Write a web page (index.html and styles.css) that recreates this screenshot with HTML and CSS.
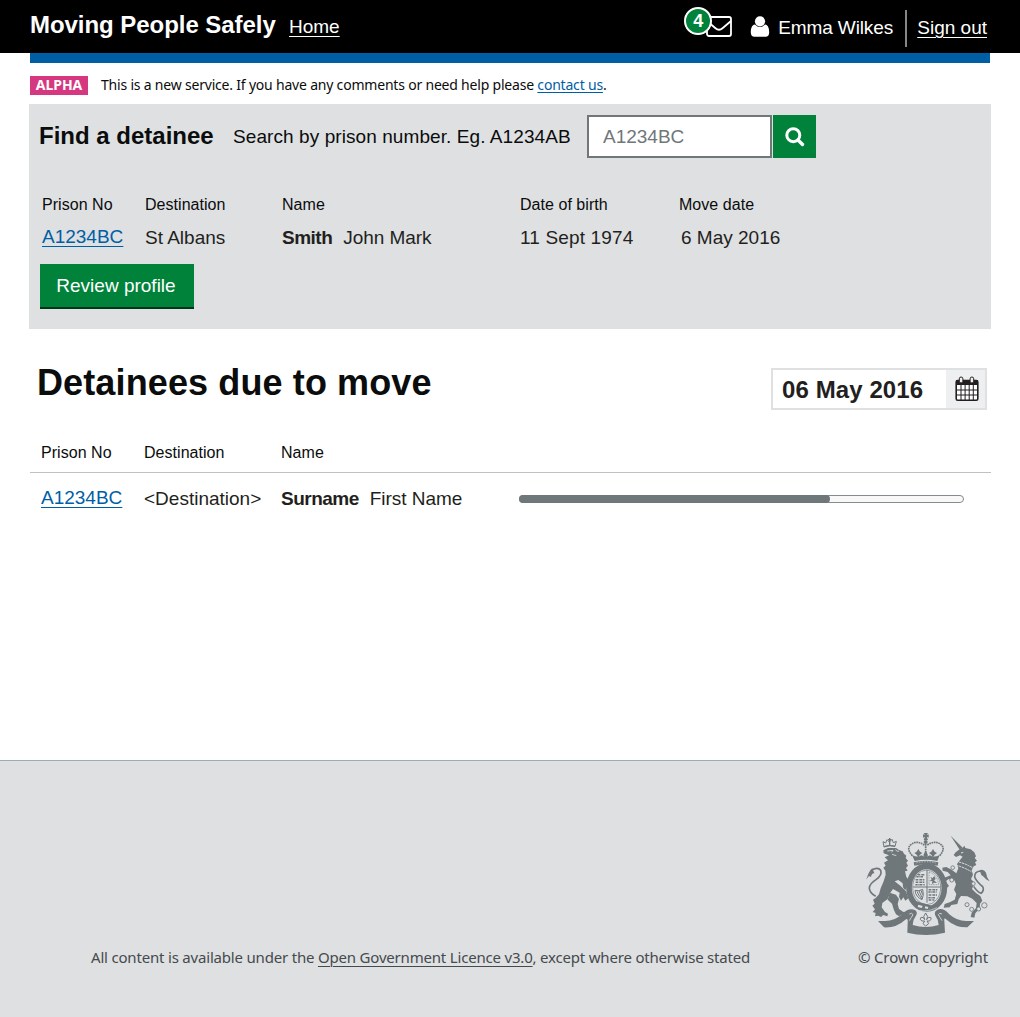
FILE: index.html
```html
<!DOCTYPE html>
<html lang="en">
<head>
<meta charset="utf-8">
<title>Moving People Safely</title>
<link rel="stylesheet" href="styles.css">
</head>
<body>
<header class="topbar">
  <span class="brand">Moving People Safely</span>
  <a class="home" href="#">Home</a>
  <div class="account">
    <a class="mail" href="#" aria-label="Messages">
      <svg width="26" height="21" viewBox="0 0 26 21" fill="none" stroke="#fff" stroke-width="1.8"><rect x="1" y="1" width="24" height="19" rx="2"/><path d="M1 5 L9.500 12.300 Q13 15.300 16.500 12.300 L25 5"/></svg>
      <span class="badge">4</span>
    </a>
    <svg class="user" width="20" height="22" viewBox="0 0 20 22" fill="#fff"><circle cx="10" cy="5.300" r="5.100"/><path d="M5 8.500 C1.500 9 .8 13 .8 16.500 C.8 19.200 2.200 20.800 4.500 20.800 H15.500 C17.800 20.800 19.200 19.200 19.200 16.500 C19.200 13 18.500 9 15 8.500 Q12.800 11 10 11 Q7.200 11 5 8.500Z"/></svg>
    <span class="user-name">Emma Wilkes</span>
    <a class="signout" href="#">Sign out</a>
  </div>
</header>
<div class="blue-bar"></div>
<div class="phase">
  <strong class="phase-tag">ALPHA</strong>
  <span class="phase-text">This is a new service. If you have any comments or need help please <a href="#">contact us</a>.</span>
</div>

<main>
  <section class="finder">
    <form class="search">
      <h2>Find a detainee</h2>
      <label for="prison-no">Search by prison number. Eg. A1234AB</label>
      <input id="prison-no" type="text" placeholder="A1234BC">
      <button class="search-button" type="button" aria-label="Search">
        <svg width="20" height="20" viewBox="0 0 20 20" fill="none" stroke="#fff"><circle cx="8.300" cy="8.200" r="6.500" stroke-width="3"/><path d="M13 13 L17.500 17.500" stroke-width="3.400" stroke-linecap="round"/></svg>
      </button>
    </form>
    <div class="grid heads">
      <span>Prison No</span><span>Destination</span><span>Name</span><span>Date of birth</span><span>Move date</span>
    </div>
    <div class="grid values">
      <a href="#">A1234BC</a><span>St Albans</span><span class="name"><b>Smith</b>John Mark</span><span class="dob">11 Sept 1974</span><span class="moved">6 May 2016</span>
    </div>
    <button class="review" type="button">Review profile</button>
  </section>

  <section class="due">
    <div class="due-top">
      <h1>Detainees due to move</h1>
      <div class="date">
        <span class="date-value">06 May 2016</span>
        <span class="date-icon">
          <svg width="24" height="26" viewBox="0 0 24 26"><rect x="1.200" y="4.500" width="21.600" height="19.800" rx="1.500" fill="#fff" stroke="#231f20" stroke-width="1.600"/><path d="M1 4 H23 V9 H1Z" fill="#231f20"/><path d="M6 9 V24 M10.100 9 V24 M14.200 9 V24 M18.300 9 V24 M1 14 H23 M1 19 H23" stroke="#231f20" stroke-width="1"/><rect x="4.300" y="1" width="3.600" height="6" rx="1.800" fill="#eeeff0" stroke="#231f20" stroke-width="1"/><rect x="15.100" y="1" width="3.600" height="6" rx="1.800" fill="#eeeff0" stroke="#231f20" stroke-width="1"/></svg>
        </span>
      </div>
    </div>
    <div class="grid heads">
      <span>Prison No</span><span>Destination</span><span>Name</span>
    </div>
    <div class="grid values row">
      <a href="#">A1234BC</a><span>&lt;Destination&gt;</span><span class="name"><b>Surname</b>First Name</span>
      <div class="progress"><div class="progress-fill" style="width:70.100%"></div></div>
    </div>
  </section>
</main>

<footer>
  <p class="licence">All content is available under the <a href="#">Open Government Licence v3.0</a>, except where otherwise stated</p>
  <div class="crown">
    <svg class="crest" width="125" height="104" viewBox="30 36 375 312" fill="#6f777b" stroke="none">
      <!-- scroll ribbon -->
      <path d="M69 303 L91 303 Q119 303 141 283 Q160 262 180 270 Q190 277 182 289 Q173 300 173 315 Q212 327 251 315 Q251 300 242 289 Q235 275 247 269 Q265 262 283 283 Q305 303 333 303 L357 303 L337 322 Q302 323 275 299 Q266 290 268 303 L270 338 Q212 352 157 338 L158 309 Q160 292 151 299 Q124 324 87 322Z"/>
      <path d="M163 282 Q171 277 174 284 Q169 292 163 302 M261 282 Q253 277 250 284 Q255 292 261 302" fill="none" stroke="#dee0e2" stroke-width="2.500"/>
      <!-- lion -->
      <path d="M85 91 L99 84 L123 84 L132 90 L143 94 L147 101 L154 107 L152 114 L159 122 L154 128 L159 137 L153 144 L158 152 L150 154 L154 171 L164 184 L169 203 L163 211 L155 201 L151 211 L144 202 L143 190 L130 180 L119 184 L136 197 L153 214 L160 235 L151 242 L145 232 L138 242 L132 230 L134 218 L114 207 L105 220 L98 237 L82 249 L80 262 L90 276 L99 281 L97 289 L84 285 L79 291 L69 287 L60 289 L62 279 L53 276 L60 268 L52 257 L59 251 L54 239 L62 234 L72 223 L77 205 L86 184 L92 164 L91 152 L85 143 L92 137 L87 128 L99 121 L89 112 L102 106 L86 100Z"/>
      <path d="M104 218 L123 224 L132 237 L128 252 L132 267 L144 275 L154 278 L151 286 L139 284 L132 289 L123 283 L117 271 L111 251 L98 239Z"/>
      <path d="M62 229 Q43 218 43 204 Q44 191 63 179 Q82 166 77 151 Q70 141 55 148 Q46 152 48 165" fill="none" stroke="#6f777b" stroke-width="5"/>
      <path d="M52 145 L58 159 L50 163 L48 171 L42 168 L34 178 L40 161 L46 151Z"/>
      <path d="M97 93 L114 91 L110 97 M121 89 L127 94 L132 93 M111 103 L124 107" fill="none" stroke="#dee0e2" stroke-width="2.500"/>
      <path d="M87 81 L84 65 L92 69 L96 59 L103 66 L111 58 L115 68 L124 64 L120 79 Q103 73 87 81Z" fill="none" stroke="#6f777b" stroke-width="3"/>
      <path d="M88 80 Q104 74 120 79 M104 54 V76 M99 59 H109" fill="none" stroke="#6f777b" stroke-width="4"/>
      <!-- unicorn -->
      <path d="M287 47 L323 83 L314 89Z"/>
      <path d="M314 88 L323 83 L328 77 L331 84 L347 88 L358 97 L363 109 L359 114 L366 122 L360 127 L364 135 L356 139 L350 151 L354 164 L348 177 L358 188 L351 207 L363 219 L376 228 L382 242 L375 251 L374 265 L361 280 L358 293 L347 291 L350 278 L363 264 L365 249 L352 236 L337 229 L318 228 L311 238 L307 252 L289 255 L284 262 L266 263 L269 252 L284 247 L299 239 L304 222 L297 209 L303 193 L298 181 L281 177 L272 184 L282 198 L275 204 L265 187 L268 173 L287 166 L278 156 L263 152 L262 143 L274 141 L291 150 L304 160 L310 145 L306 132 L315 120 L323 110 L315 106 L303 111 L296 105 L302 97Z"/>
      <path d="M356 199 Q366 215 378 220 Q389 211 383 200 Q364 184 359 171 Q358 155 376 153 Q391 154 392 170" fill="none" stroke="#6f777b" stroke-width="5"/>
      <path d="M374 151 Q386 146 393 158 L396 171 L404 184 L393 178 L386 170 L379 165Z"/>
      <path d="M304 136 Q325 141 349 155 M312 126 Q334 132 354 144 M318 99 L325 97" fill="none" stroke="#dee0e2" stroke-width="3" stroke-dasharray="7 2"/>
      <g fill="#dee0e2" stroke="#6f777b" stroke-width="2.500"><circle cx="293" cy="143" r="5.500"/><circle cx="290" cy="180" r="6"/><circle cx="355" cy="191" r="5.500"/><circle cx="336" cy="254" r="6"/><circle cx="350" cy="268" r="6"/><circle cx="371" cy="267" r="6"/><circle cx="388" cy="256" r="8"/></g>
      <!-- crown -->
      <path d="M179 123 L171 105 Q188 114 199 106 Q212 113 225 106 Q236 114 254 105 L247 123 Q212 116 179 123Z"/>
      <path d="M176 127 Q212 118 250 127 L248 137 Q212 128 178 137Z"/>
      <path d="M172 107 Q152 85 169 73 Q185 60 208 75 M254 107 Q273 85 257 73 Q240 60 217 75 M212 72 V112" fill="none" stroke="#6f777b" stroke-width="5" stroke-dasharray="5 2"/>
      <path d="M206 39 H219 L215 45 L221 43 V53 L215 50 L219 60 H206 L210 50 L204 53 V43 L210 45Z"/><circle cx="212" cy="66" r="6"/>
      <path d="M190 87 L195 95 L202 99 L195 104 L190 112 L185 104 L178 99 L185 95Z M234 87 L239 95 L246 99 L239 104 L234 112 L229 104 L222 99 L229 95Z M212 91 L219 106 L212 115 L205 106Z"/>
      <path d="M184 129 Q212 121 242 129" fill="none" stroke="#dee0e2" stroke-width="2" stroke-dasharray="4 4"/>
      <!-- garter and shield -->
      <ellipse cx="215" cy="203" rx="53" ry="64" fill="none" stroke="#6f777b" stroke-width="17"/>
      <ellipse cx="215" cy="202" rx="42" ry="52" fill="none" stroke="#6f777b" stroke-width="2"/>
      <path d="M216 150 V248 M174 201 H257" fill="none" stroke="#6f777b" stroke-width="3"/>
      <path d="M188 164 H208 M184 170 H204 M182 179 H209 M182 187 H209 M181 194 H209 M221 209 H248 M220 216 H246 M221 225 H247 M220 233 H242 M221 240 H238" fill="none" stroke="#6f777b" stroke-width="4.500" stroke-dasharray="7 2 3 1"/>
      <path d="M222 156 Q247 164 251 194 H222Z" fill="none" stroke="#6f777b" stroke-width="2" stroke-dasharray="3 2"/>
      <path d="M226 171 L233 174 L238 168 L242 177 L237 181 L246 189 L237 188 L231 193 L232 183 L224 184 L230 178Z"/>
      <path d="M180 211 Q192 215 203 208 Q208 225 201 239 Q182 231 180 211Z M186 214 Q189 225 201 237 M192 213 L201 232 M198 211 L203 224" fill="none" stroke="#6f777b" stroke-width="3"/>
      <path d="M184 244 L237 259 L230 273 L181 262Z"/>
      <path d="M190 254 L203 258 L200 264 L188 261Z M211 259 L220 261 L218 267 L209 265Z" fill="#dee0e2"/>
      <path d="M177 267 Q208 281 246 263" fill="none" stroke="#dee0e2" stroke-width="2"/>
      <path d="M212 279 Q222 290 215 299 Q219 290 227 292 Q232 299 223 303 L216 303 L221 311 L212 318 L204 311 L209 303 L201 303 Q192 299 198 292 Q206 290 209 299 Q202 290 212 279Z" fill="none" stroke="#6f777b" stroke-width="3"/>
    </svg>
    <span class="copyright">© Crown copyright</span>
  </div>
</footer>
</body>
</html>
```

FILE: styles.css
```css
* { box-sizing: border-box; }
body {
  margin: 0;
  width: 1020px;
  height: 1017px;
  display: flex;
  flex-direction: column;
  background: #fff;
  color: #231f20;
  font: 19px/24px "Liberation Sans", Arial, sans-serif;
}
h1, h2, p { margin: 0; }
a { color: #005ea5; text-underline-offset: 3px; text-decoration-thickness: 1px; }

.topbar {
  height: 53px;
  flex: none;
  display: flex;
  align-items: flex-start;
  padding: 0 33px 0 30px;
  background: #000;
  color: #fff;
}
.topbar a { color: #fff; }
.brand { font-size: 24px; font-weight: bold; padding-top: 13px; width: 259px; letter-spacing: -0.05px; white-space: nowrap; }
.home { padding-top: 15px; }
.account { display: flex; margin-left: auto; }
.mail { position: relative; display: block; height: 21px; margin: 16px 18px 0 0; }
.mail svg { display: block; }
.badge {
  position: absolute;
  left: -22px;
  top: -9px;
  width: 28px;
  height: 28px;
  border: 2px solid #fff;
  border-radius: 50%;
  background: #00823b;
  font-size: 18px;
  font-weight: bold;
  line-height: 24px;
  text-align: center;
}
.user { margin: 16px 8px 0 0; }
.user-name { padding-top: 16px; width: 127px; letter-spacing: -0.12px; white-space: nowrap; }
.signout {
  margin-top: 10px;
  height: 37px;
  padding: 6px 0 0 10px;
  border-left: 2px solid #858688;
  white-space: nowrap;
}

.blue-bar { height: 10px; flex: none; margin: 0 30px; background: #005ea5; }

.phase {
  height: 41px;
  flex: none;
  display: flex;
  align-items: flex-start;
  padding: 13px 30px 0;
  font-family: "Noto Sans", sans-serif;
  color: #0b0c0c;
}
.phase-tag {
  width: 58px;
  height: 19px;
  margin-right: 13px;
  background: #d53880;
  color: #fff;
  font-size: 14px;
  line-height: 18px;
  text-align: center;
}
.phase-text { font-size: 14px; line-height: 18px; letter-spacing: -0.2px; white-space: nowrap; }
.phase-text a { text-underline-offset: 2px; }

.finder { height: 225px; margin: 0 29px; padding: 11px 11px 0; background: #dee0e2; }
.search { display: flex; height: 43px; align-items: flex-start; color: #0b0c0c; }
.search h2 { width: 194px; padding-top: 9px; font-size: 24px; line-height: 24px; white-space: nowrap; margin-left: -1px; }
.search label { width: 354px; padding-top: 10px; letter-spacing: 0.08px; white-space: nowrap; }
.search input {
  width: 185px;
  height: 43px;
  margin: 0 1px 0 0;
  padding: 1px 14px 0;
  border: 2px solid #6f777b;
  border-radius: 0;
  background: #fff;
  font: 19px "Liberation Sans", Arial, sans-serif;
}
.search input::placeholder { color: #6f777b; opacity: 1; }
.search-button {
  width: 43px;
  height: 43px;
  padding: 0;
  border: 0;
  background: #00823b;
  display: flex;
  align-items: center;
  justify-content: center;
}

.grid { display: grid; grid-template-columns: 103px 137px 238px 159px 1fr; white-space: nowrap; }
.heads { font-size: 16px; line-height: 20px; letter-spacing: 0.04px; color: #0b0c0c; }
.finder .grid { padding-left: 2px; }
.finder .heads { margin-top: 37px; }
.finder .values { margin-top: 11px; }
.values > a { margin-top: -1px; }
.name b { margin-right: 11px; letter-spacing: -0.5px; }
.name { letter-spacing: -0.05px; }
.dob { letter-spacing: 0.15px; }
.moved { padding-left: 2px; }
.review {
  display: block;
  width: 154px;
  height: 45px;
  margin-top: 14px;
  padding: 0 2px 0 0;
  border: 0;
  border-bottom: 2px solid #003618;
  background: #00823b;
  color: #fff;
  font: 19px/24px "Liberation Sans", Arial, sans-serif;
}

.due { padding: 39px 29px 0 30px; }
.due-top { display: flex; justify-content: space-between; align-items: flex-start; height: 75px; padding: 0 4px 0 7px; }
h1 { font-size: 36px; line-height: 30px; letter-spacing: 0.12px; color: #0b0c0c; white-space: nowrap; }
.date { display: flex; width: 216px; height: 42px; border: 2px solid #dee0e1; }
.date-value { flex: 1; padding: 8px 0 0 9px; font-size: 24px; line-height: 24px; font-weight: bold; letter-spacing: 0.1px; white-space: nowrap; }
.date-icon { width: 39px; padding-left: 2px; background: #eeeff0; display: flex; align-items: center; justify-content: center; }
.due .heads { height: 30px; padding-left: 11px; border-bottom: 1px solid #bfc1c3; }
.due .row { padding: 14px 0 0 11px; }
.progress { grid-column: 4 / 6; width: 445px; height: 8px; margin: 8px 0 0; border: 1px solid #858c8f; border-radius: 4px; background: #f8f8f8; }
.progress-fill { height: 8px; margin: -1px; border-radius: 4px; background: #6f777b; }

footer {
  height: 257px;
  flex: none;
  margin-top: auto;
  padding: 71px 30px 0 91px;
  border-top: 1px solid #a1acb2;
  background: #dee0e2;
  display: flex;
  justify-content: space-between;
  color: #454a4d;
  font: 15px/20px "Noto Sans", sans-serif;
}
footer a { color: inherit; }
.licence { padding-top: 115px; letter-spacing: -0.19px; white-space: nowrap; }
.crown { display: flex; flex-direction: column; align-items: flex-end; }
.crest { display: block; }
.copyright { margin-top: 11px; padding-right: 2px; letter-spacing: -0.13px; white-space: nowrap; }
```
